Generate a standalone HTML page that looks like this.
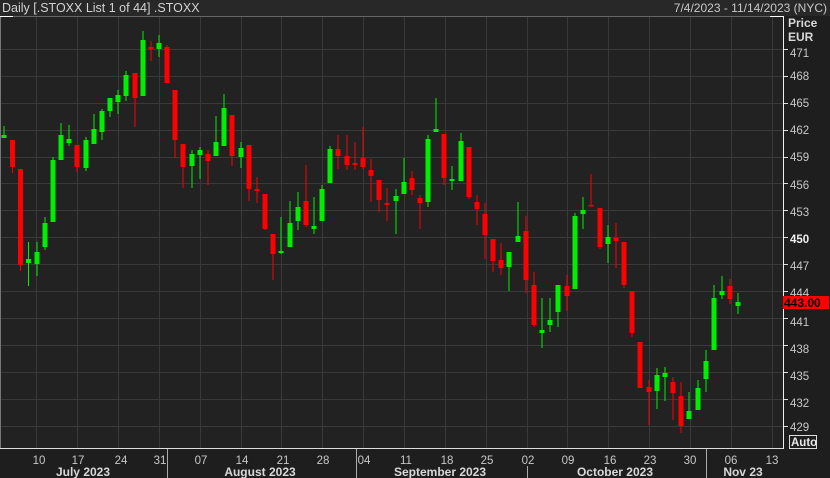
<!DOCTYPE html>
<html><head><meta charset="utf-8"><style>
html,body{margin:0;padding:0;background:#222;}
body{width:830px;height:478px;overflow:hidden;font-family:"Liberation Sans Narrow","Liberation Sans",sans-serif;}
</style></head><body>
<svg width="830" height="478" xmlns="http://www.w3.org/2000/svg" style="display:block" font-family="Liberation Sans Narrow, Liberation Sans, sans-serif">
<rect x="0" y="0" width="830" height="478" fill="#1e1e1e"/>
<rect x="0" y="0" width="830" height="16" fill="#282828"/>
<rect x="1" y="17" width="782" height="432" fill="#222222"/>
<text x="2" y="12" fill="#d2d2d2" font-size="12.5">Daily [.STOXX List 1 of 44] .STOXX</text>
<text x="827" y="12" fill="#c8c8c8" font-size="12" text-anchor="end">7/4/2023 - 11/14/2023 (NYC)</text>
<line x1="0" y1="16.5" x2="784" y2="16.5" stroke="#666"/>
<line x1="0" y1="16.5" x2="13" y2="16.5" stroke="#fff"/>
<line x1="770" y1="16.5" x2="784" y2="16.5" stroke="#fff"/>
<line x1="0.5" y1="17" x2="0.5" y2="449" stroke="#777"/>
<line x1="0" y1="448.5" x2="784" y2="448.5" stroke="#ddd"/>
<line x1="783.5" y1="17" x2="783.5" y2="449" stroke="#eee"/>
<g stroke="#3a3a3a" stroke-width="1">
<line x1="1" y1="49.5" x2="783" y2="49.5"/><line x1="1" y1="76.5" x2="783" y2="76.5"/><line x1="1" y1="103.5" x2="783" y2="103.5"/><line x1="1" y1="130.5" x2="783" y2="130.5"/><line x1="1" y1="157.5" x2="783" y2="157.5"/><line x1="1" y1="183.5" x2="783" y2="183.5"/><line x1="1" y1="210.5" x2="783" y2="210.5"/><line x1="1" y1="237.5" x2="783" y2="237.5"/><line x1="1" y1="264.5" x2="783" y2="264.5"/><line x1="1" y1="291.5" x2="783" y2="291.5"/><line x1="1" y1="318.5" x2="783" y2="318.5"/><line x1="1" y1="345.5" x2="783" y2="345.5"/><line x1="1" y1="372.5" x2="783" y2="372.5"/><line x1="1" y1="399.5" x2="783" y2="399.5"/><line x1="1" y1="426.5" x2="783" y2="426.5"/>
<line x1="36.5" y1="17" x2="36.5" y2="448"/><line x1="77.5" y1="17" x2="77.5" y2="448"/><line x1="118.5" y1="17" x2="118.5" y2="448"/><line x1="159.5" y1="17" x2="159.5" y2="448"/><line x1="200.5" y1="17" x2="200.5" y2="448"/><line x1="241.5" y1="17" x2="241.5" y2="448"/><line x1="281.5" y1="17" x2="281.5" y2="448"/><line x1="322.5" y1="17" x2="322.5" y2="448"/><line x1="363.5" y1="17" x2="363.5" y2="448"/><line x1="404.5" y1="17" x2="404.5" y2="448"/><line x1="445.5" y1="17" x2="445.5" y2="448"/><line x1="486.5" y1="17" x2="486.5" y2="448"/><line x1="527.5" y1="17" x2="527.5" y2="448"/><line x1="567.5" y1="17" x2="567.5" y2="448"/><line x1="608.5" y1="17" x2="608.5" y2="448"/><line x1="649.5" y1="17" x2="649.5" y2="448"/><line x1="690.5" y1="17" x2="690.5" y2="448"/><line x1="731.5" y1="17" x2="731.5" y2="448"/><line x1="772.5" y1="17" x2="772.5" y2="448"/>
</g>
<g stroke="#00ee00" fill="#00ee00" stroke-width="1">
<line x1="4" y1="126" x2="4" y2="138"/><rect x="1.5" y="135" width="5" height="3" stroke="none"/>
<line x1="28.5" y1="242" x2="28.5" y2="286"/><rect x="26" y="259" width="5" height="4" stroke="none"/>
<line x1="37" y1="242" x2="37" y2="276"/><rect x="34.5" y="252" width="5" height="12" stroke="none"/>
<line x1="45" y1="217" x2="45" y2="250"/><rect x="42.5" y="223" width="5" height="24" stroke="none"/>
<line x1="53" y1="157" x2="53" y2="222"/><rect x="50.5" y="160" width="5" height="62" stroke="none"/>
<line x1="61" y1="123" x2="61" y2="160"/><rect x="58.5" y="135" width="5" height="25" stroke="none"/>
<line x1="69" y1="125" x2="69" y2="146"/><rect x="66.5" y="139" width="5" height="4" stroke="none"/>
<line x1="86" y1="137" x2="86" y2="171"/><rect x="83.5" y="140" width="5" height="28" stroke="none"/>
<line x1="94" y1="114" x2="94" y2="144"/><rect x="91.5" y="129" width="5" height="15" stroke="none"/>
<line x1="102" y1="109" x2="102" y2="140"/><rect x="99.5" y="111" width="5" height="21" stroke="none"/>
<line x1="110" y1="98" x2="110" y2="117"/><rect x="107.5" y="98" width="5" height="13" stroke="none"/>
<line x1="118" y1="90" x2="118" y2="114"/><rect x="115.5" y="95" width="5" height="7" stroke="none"/>
<line x1="126" y1="71" x2="126" y2="101"/><rect x="123.5" y="75" width="5" height="21" stroke="none"/>
<line x1="143" y1="31" x2="143" y2="96"/><rect x="140.5" y="40" width="5" height="56" stroke="none"/>
<line x1="159" y1="35" x2="159" y2="57"/><rect x="156.5" y="43" width="5" height="6" stroke="none"/>
<line x1="192" y1="150" x2="192" y2="188"/><rect x="189.5" y="154" width="5" height="12" stroke="none"/>
<line x1="200" y1="147" x2="200" y2="179"/><rect x="197.5" y="150" width="5" height="5" stroke="none"/>
<line x1="216" y1="116" x2="216" y2="156"/><rect x="213.5" y="142" width="5" height="14" stroke="none"/>
<line x1="224" y1="94" x2="224" y2="146"/><rect x="221.5" y="108" width="5" height="38" stroke="none"/>
<line x1="241" y1="142" x2="241" y2="168"/><rect x="238.5" y="148" width="5" height="9" stroke="none"/>
<line x1="281" y1="217" x2="281" y2="254"/><rect x="278.5" y="251" width="5" height="2" stroke="none"/>
<line x1="290" y1="201" x2="290" y2="247"/><rect x="287.5" y="223" width="5" height="24" stroke="none"/>
<line x1="298" y1="192" x2="298" y2="230"/><rect x="295.5" y="207" width="5" height="14" stroke="none"/>
<line x1="314" y1="197" x2="314" y2="234"/><rect x="311.5" y="226" width="5" height="3" stroke="none"/>
<line x1="322" y1="185" x2="322" y2="221"/><rect x="319.5" y="189" width="5" height="32" stroke="none"/>
<line x1="330" y1="146" x2="330" y2="183"/><rect x="327.5" y="149" width="5" height="34" stroke="none"/>
<line x1="396" y1="189" x2="396" y2="234"/><rect x="393.5" y="196" width="5" height="5" stroke="none"/>
<line x1="404" y1="158" x2="404" y2="194"/><rect x="401.5" y="182" width="5" height="12" stroke="none"/>
<line x1="428" y1="135" x2="428" y2="207"/><rect x="425.5" y="139" width="5" height="63" stroke="none"/>
<line x1="436" y1="98" x2="436" y2="132"/><rect x="433.5" y="129" width="5" height="3" stroke="none"/>
<line x1="452" y1="166" x2="452" y2="190"/><rect x="449.5" y="179" width="5" height="2" stroke="none"/>
<line x1="461" y1="133" x2="461" y2="181"/><rect x="458.5" y="141" width="5" height="40" stroke="none"/>
<line x1="509" y1="252" x2="509" y2="291"/><rect x="506.5" y="252" width="5" height="15" stroke="none"/>
<line x1="518" y1="202" x2="518" y2="242"/><rect x="515.5" y="236" width="5" height="6" stroke="none"/>
<line x1="542" y1="298" x2="542" y2="348"/><rect x="539.5" y="330" width="5" height="3" stroke="none"/>
<line x1="550" y1="298" x2="550" y2="332"/><rect x="547.5" y="320" width="5" height="5" stroke="none"/>
<line x1="558" y1="285" x2="558" y2="327"/><rect x="555.5" y="285" width="5" height="27" stroke="none"/>
<line x1="575" y1="213" x2="575" y2="289"/><rect x="572.5" y="216" width="5" height="73" stroke="none"/>
<line x1="583" y1="197" x2="583" y2="229"/><rect x="580.5" y="210" width="5" height="4" stroke="none"/>
<line x1="608" y1="225" x2="608" y2="263"/><rect x="605.5" y="237" width="5" height="7" stroke="none"/>
<line x1="657" y1="368" x2="657" y2="409"/><rect x="654.5" y="375" width="5" height="16" stroke="none"/>
<line x1="665" y1="367" x2="665" y2="401"/><rect x="662.5" y="373" width="5" height="4" stroke="none"/>
<line x1="689" y1="392" x2="689" y2="419"/><rect x="686.5" y="411" width="5" height="8" stroke="none"/>
<line x1="698" y1="380" x2="698" y2="410"/><rect x="695.5" y="388" width="5" height="22" stroke="none"/>
<line x1="706" y1="350" x2="706" y2="392"/><rect x="703.5" y="361" width="5" height="18" stroke="none"/>
<line x1="714" y1="285" x2="714" y2="350"/><rect x="711.5" y="298" width="5" height="52" stroke="none"/>
<line x1="722" y1="276" x2="722" y2="299"/><rect x="719.5" y="291" width="5" height="4" stroke="none"/>
<line x1="738" y1="293" x2="738" y2="314"/><rect x="735.5" y="302" width="5" height="4" stroke="none"/>
</g>
<g stroke="#ff0000" fill="#ff0000" stroke-width="1">
<line x1="12.5" y1="140" x2="12.5" y2="173"/><rect x="10" y="140" width="5" height="27" stroke="none"/>
<line x1="20.5" y1="169" x2="20.5" y2="271"/><rect x="18" y="169" width="5" height="96" stroke="none"/>
<line x1="77" y1="145" x2="77" y2="172"/><rect x="74.5" y="145" width="5" height="22" stroke="none"/>
<line x1="135" y1="73" x2="135" y2="127"/><rect x="132.5" y="73" width="5" height="25" stroke="none"/>
<line x1="151" y1="41" x2="151" y2="61"/><rect x="148.5" y="47" width="5" height="2" stroke="none"/>
<line x1="167" y1="45" x2="167" y2="83"/><rect x="164.5" y="47" width="5" height="36" stroke="none"/>
<line x1="175" y1="90" x2="175" y2="158"/><rect x="172.5" y="90" width="5" height="50" stroke="none"/>
<line x1="183" y1="144" x2="183" y2="188"/><rect x="180.5" y="144" width="5" height="23" stroke="none"/>
<line x1="208" y1="150" x2="208" y2="185"/><rect x="205.5" y="154" width="5" height="7" stroke="none"/>
<line x1="232" y1="115" x2="232" y2="166"/><rect x="229.5" y="115" width="5" height="41" stroke="none"/>
<line x1="249" y1="145" x2="249" y2="201"/><rect x="246.5" y="145" width="5" height="44" stroke="none"/>
<line x1="257" y1="177" x2="257" y2="203"/><rect x="254.5" y="189" width="5" height="2" stroke="none"/>
<line x1="265" y1="194" x2="265" y2="230"/><rect x="262.5" y="194" width="5" height="35" stroke="none"/>
<line x1="273" y1="234" x2="273" y2="280"/><rect x="270.5" y="234" width="5" height="20" stroke="none"/>
<line x1="306" y1="165" x2="306" y2="227"/><rect x="303.5" y="201" width="5" height="24" stroke="none"/>
<line x1="338" y1="135" x2="338" y2="169"/><rect x="335.5" y="149" width="5" height="7" stroke="none"/>
<line x1="347" y1="135" x2="347" y2="170"/><rect x="344.5" y="156" width="5" height="9" stroke="none"/>
<line x1="355" y1="142" x2="355" y2="170"/><rect x="352.5" y="163" width="5" height="2" stroke="none"/>
<line x1="363" y1="127" x2="363" y2="169"/><rect x="360.5" y="158" width="5" height="9" stroke="none"/>
<line x1="371" y1="159" x2="371" y2="202"/><rect x="368.5" y="170" width="5" height="6" stroke="none"/>
<line x1="379" y1="180" x2="379" y2="212"/><rect x="376.5" y="180" width="5" height="20" stroke="none"/>
<line x1="387" y1="188" x2="387" y2="221"/><rect x="384.5" y="203" width="5" height="2" stroke="none"/>
<line x1="412" y1="171" x2="412" y2="195"/><rect x="409.5" y="178" width="5" height="12" stroke="none"/>
<line x1="420" y1="195" x2="420" y2="229"/><rect x="417.5" y="198" width="5" height="5" stroke="none"/>
<line x1="444" y1="134" x2="444" y2="185"/><rect x="441.5" y="134" width="5" height="44" stroke="none"/>
<line x1="469" y1="147" x2="469" y2="199"/><rect x="466.5" y="147" width="5" height="50" stroke="none"/>
<line x1="477" y1="195" x2="477" y2="225"/><rect x="474.5" y="202" width="5" height="7" stroke="none"/>
<line x1="485" y1="203" x2="485" y2="259"/><rect x="482.5" y="214" width="5" height="21" stroke="none"/>
<line x1="493" y1="239" x2="493" y2="272"/><rect x="490.5" y="239" width="5" height="22" stroke="none"/>
<line x1="501" y1="243" x2="501" y2="275"/><rect x="498.5" y="260" width="5" height="8" stroke="none"/>
<line x1="526" y1="216" x2="526" y2="293"/><rect x="523.5" y="231" width="5" height="49" stroke="none"/>
<line x1="534" y1="272" x2="534" y2="327"/><rect x="531.5" y="285" width="5" height="40" stroke="none"/>
<line x1="567" y1="275" x2="567" y2="311"/><rect x="564.5" y="286" width="5" height="10" stroke="none"/>
<line x1="591" y1="174" x2="591" y2="206"/><rect x="588.5" y="205" width="5" height="1.5" stroke="none"/>
<line x1="600" y1="208" x2="600" y2="249"/><rect x="597.5" y="208" width="5" height="39" stroke="none"/>
<line x1="616" y1="223" x2="616" y2="268"/><rect x="613.5" y="238" width="5" height="3" stroke="none"/>
<line x1="624" y1="242" x2="624" y2="288"/><rect x="621.5" y="242" width="5" height="43" stroke="none"/>
<line x1="632" y1="291" x2="632" y2="337"/><rect x="629.5" y="291" width="5" height="42" stroke="none"/>
<line x1="640" y1="342" x2="640" y2="388"/><rect x="637.5" y="342" width="5" height="46" stroke="none"/>
<line x1="649" y1="380" x2="649" y2="425"/><rect x="646.5" y="387" width="5" height="5" stroke="none"/>
<line x1="673" y1="377" x2="673" y2="420"/><rect x="670.5" y="382" width="5" height="11" stroke="none"/>
<line x1="681" y1="382" x2="681" y2="433"/><rect x="678.5" y="396" width="5" height="30" stroke="none"/>
<line x1="730" y1="279" x2="730" y2="304"/><rect x="727.5" y="286" width="5" height="13" stroke="none"/>
</g>
<g font-size="12" font-weight="bold" fill="#d8d8d8">
<text x="788" y="27">Price</text>
<text x="788" y="41">EUR</text>
</g>
<g stroke="#ddd"><line x1="784" y1="49.5" x2="788" y2="49.5"/><line x1="784" y1="76.5" x2="788" y2="76.5"/><line x1="784" y1="103.5" x2="788" y2="103.5"/><line x1="784" y1="130.5" x2="788" y2="130.5"/><line x1="784" y1="157.5" x2="788" y2="157.5"/><line x1="784" y1="183.5" x2="788" y2="183.5"/><line x1="784" y1="210.5" x2="788" y2="210.5"/><line x1="784" y1="237.5" x2="788" y2="237.5"/><line x1="784" y1="264.5" x2="788" y2="264.5"/><line x1="784" y1="291.5" x2="788" y2="291.5"/><line x1="784" y1="318.5" x2="788" y2="318.5"/><line x1="784" y1="345.5" x2="788" y2="345.5"/><line x1="784" y1="372.5" x2="788" y2="372.5"/><line x1="784" y1="399.5" x2="788" y2="399.5"/><line x1="784" y1="426.5" x2="788" y2="426.5"/></g>
<g fill="#c8c8c8" font-size="11.5">
<text x="790" y="57">471</text><text x="790" y="80">468</text><text x="790" y="107">465</text><text x="790" y="134">462</text><text x="790" y="161">459</text><text x="790" y="189">456</text><text x="790" y="216">453</text><text x="790" y="243" font-weight="bold" fill="#f0f0f0">450</text><text x="790" y="270">447</text><text x="790" y="297">444</text><text x="790" y="326">441</text><text x="790" y="353">438</text><text x="790" y="380">435</text><text x="790" y="407">432</text><text x="790" y="431">429</text>
</g>
<rect x="783" y="296" width="46" height="13" fill="#ff0000"/>
<text x="784" y="307" font-size="12" font-weight="bold" fill="#000">443.00</text>
<rect x="789.5" y="435.5" width="27" height="13" fill="none" stroke="#ddd"/>
<text x="791" y="446" font-size="11.5" font-weight="bold" fill="#e8e8e8">Auto</text>
<g fill="#c8c8c8" font-size="11.5" text-anchor="middle">
<text x="39" y="464">10</text><text x="78" y="464">17</text><text x="121" y="464">24</text><text x="160" y="464">31</text><text x="201" y="464">07</text><text x="242" y="464">14</text><text x="283" y="464">21</text><text x="323" y="464">28</text><text x="364" y="464">04</text><text x="406" y="464">11</text><text x="447" y="464">18</text><text x="487" y="464">25</text><text x="528" y="464">02</text><text x="568" y="464">09</text><text x="610" y="464">16</text><text x="650" y="464">23</text><text x="690" y="464">30</text><text x="731" y="464">06</text><text x="772" y="464">13</text>
</g>
<g fill="#d8d8d8" font-size="12" font-weight="bold" text-anchor="middle">
<text x="83" y="476">July 2023</text><text x="260" y="476">August 2023</text><text x="440" y="476">September 2023</text><text x="615" y="476">October 2023</text><text x="743" y="476">Nov 23</text>
</g>
<g stroke="#aaa"><line x1="167.5" y1="449" x2="167.5" y2="478"/><line x1="356.5" y1="449" x2="356.5" y2="478"/><line x1="527.5" y1="466" x2="527.5" y2="478"/><line x1="706.5" y1="449" x2="706.5" y2="478"/></g>
</svg>
</body></html>
